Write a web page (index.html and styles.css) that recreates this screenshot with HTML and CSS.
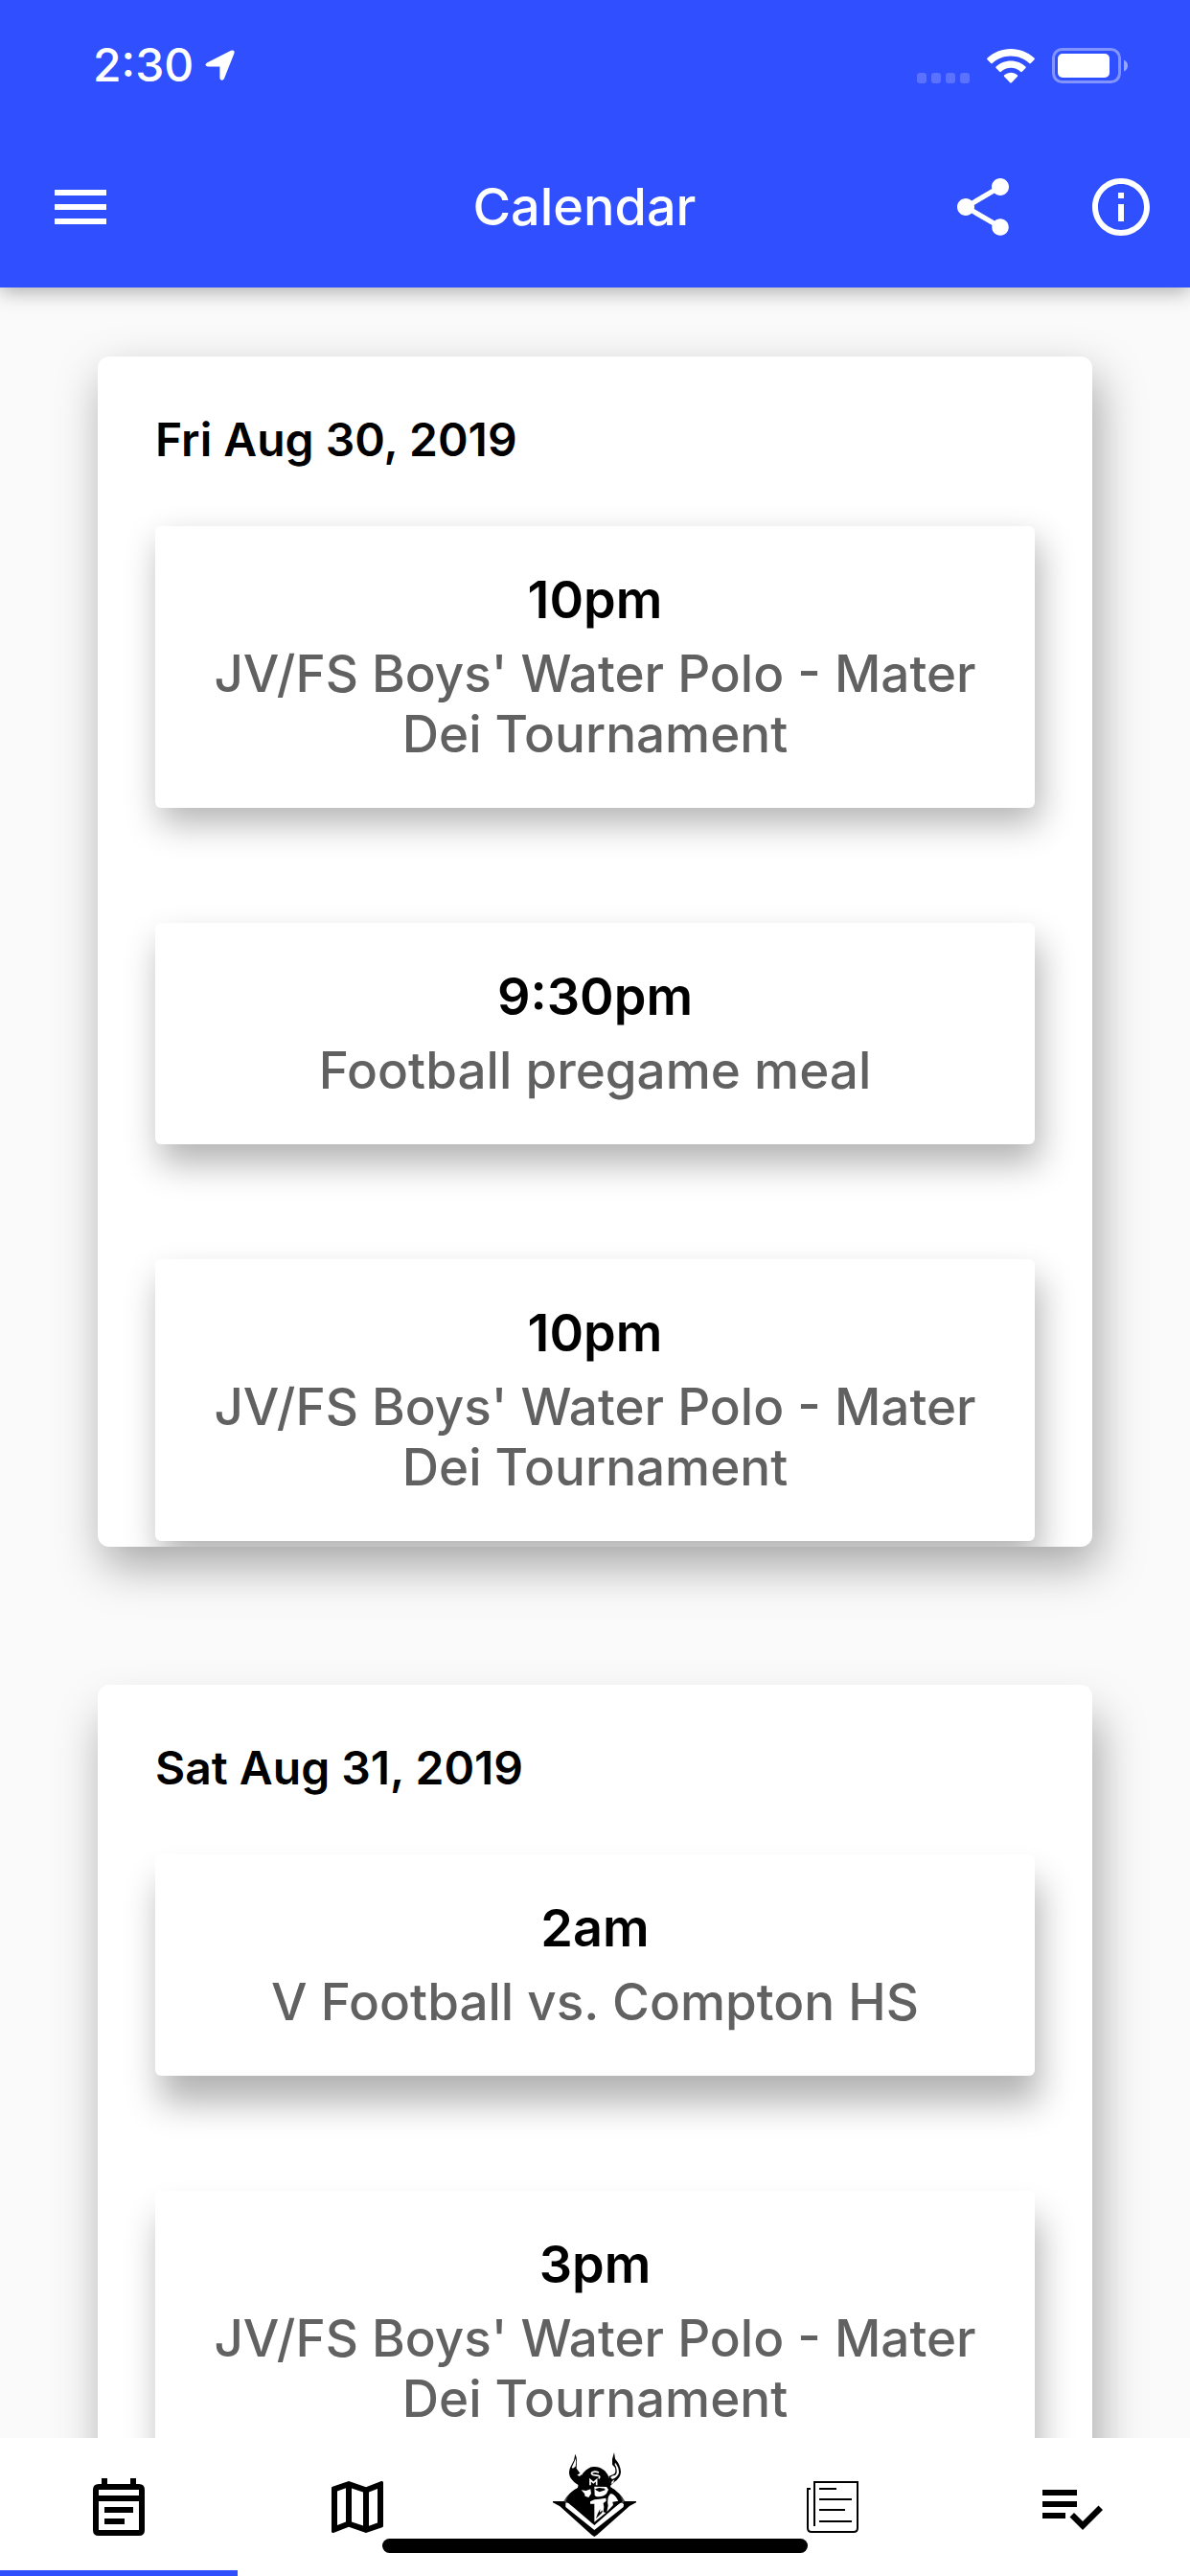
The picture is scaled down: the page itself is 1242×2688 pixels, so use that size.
FILE: index.html
```html
<!DOCTYPE html>
<html lang="en">
<head>
<meta charset="utf-8">
<meta name="viewport" content="width=device-width">
<title>Calendar</title>
<link rel="stylesheet" href="styles.css">
</head>
<body>
<header class="app-header">
  <div class="status-bar">
    <div class="status-left">
      <span class="clock">2:30</span>
      <svg class="location" viewBox="0 0 31 32" aria-hidden="true"><path d="M2 13.500 27 .8q4.500-1.600 3.400 3L20 30q-1.600 3-4 1-.6-1-.6-2.500V17.500H3Q-1.500 16.500 2 13.500z"/></svg>
    </div>
    <div class="status-right">
      <svg class="signal" viewBox="0 0 55 11" aria-hidden="true"><rect width="10" height="11" rx="3"/><rect x="15" width="10" height="11" rx="3"/><rect x="30" width="10" height="11" rx="3"/><rect x="45" width="10" height="11" rx="3"/></svg>
      <svg class="wifi" viewBox="0 0 50 36" aria-hidden="true"><path d="M25 0C34.500 0 43 3.600 49.500 9.600q.7.800 0 1.700L45.800 15q-.8.700-1.600 0C39 10.200 32.300 7.500 25 7.500S11 10.200 5.800 15q-.8.700-1.600 0L.5 11.300q-.7-.9 0-1.700C7 3.600 15.500 0 25 0zM25 12.400c6 0 11.400 2.300 15.400 6q.8.800 0 1.700l-3.600 3.700q-.8.700-1.700 0a14.700 14.700 0 0 0-20.200 0q-.9.700-1.700 0L9.600 20.100q-.8-.9 0-1.700c4-3.700 9.400-6 15.400-6zM25 24.800c2.600 0 5 1 6.800 2.500q.8.800 0 1.600l-6 6.300q-.8.800-1.600 0l-6-6.300q-.8-.8 0-1.600A10.500 10.500 0 0 1 25 24.800z"/></svg>
      <svg class="battery" viewBox="0 0 80 37" aria-hidden="true"><rect x="1.500" y="1.500" width="69" height="34" rx="9" fill="none" stroke="#fff" stroke-width="3" opacity=".4"/><rect x="6" y="6" width="54" height="25" rx="5"/><path d="M75 12.500q4 2 4 6t-4 6z" opacity=".5"/></svg>
    </div>
  </div>
  <div class="toolbar">
    <button class="icon-button menu-button" type="button" aria-label="Menu"><svg class="icon" viewBox="0 0 24 24"><path d="M3 18h18v-2H3v2zm0-5h18v-2H3v2zm0-7v2h18V6H3z"/></svg></button>
    <h1 class="title">Calendar</h1>
    <div class="actions">
      <button class="icon-button" type="button" aria-label="Share"><svg class="icon" viewBox="0 0 24 24"><path d="M18 16.080c-.76 0-1.440.3-1.960.77L8.910 12.700c.05-.23.09-.46.09-.7s-.04-.47-.09-.7l7.050-4.110c.54.5 1.250.81 2.040.81 1.660 0 3-1.340 3-3s-1.340-3-3-3-3 1.340-3 3c0 .24.04.47.09.7L8.040 9.810C7.500 9.310 6.790 9 6 9c-1.660 0-3 1.340-3 3s1.340 3 3 3c.79 0 1.500-.31 2.040-.81l7.120 4.160c-.05.21-.08.43-.08.65 0 1.610 1.310 2.920 2.920 2.920 1.610 0 2.920-1.310 2.920-2.920s-1.310-2.920-2.920-2.920z"/></svg></button>
      <button class="icon-button" type="button" aria-label="Information"><svg class="icon" viewBox="0 0 24 24"><path d="M11 17h2v-6h-2v6zm1-15C6.480 2 2 6.480 2 12s4.480 10 10 10 10-4.480 10-10S17.520 2 12 2zm0 18c-4.410 0-8-3.590-8-8s3.590-8 8-8 8 3.590 8 8-3.590 8-8 8zM11 9h2V7h-2v2z"/></svg></button>
    </div>
  </div>
</header>

<main class="days">
  <section class="day">
    <h2 class="date">Fri Aug 30, 2019</h2>
    <div class="events">
      <article class="event"><h3 class="time">10pm</h3><p class="name">JV/FS Boys' Water Polo - Mater Dei Tournament</p></article>
      <article class="event"><h3 class="time">9:30pm</h3><p class="name">Football pregame meal</p></article>
      <article class="event"><h3 class="time">10pm</h3><p class="name">JV/FS Boys' Water Polo - Mater Dei Tournament</p></article>
    </div>
  </section>
  <section class="day">
    <h2 class="date">Sat Aug 31, 2019</h2>
    <div class="events">
      <article class="event"><h3 class="time">2am</h3><p class="name">V Football vs. Compton HS</p></article>
      <article class="event"><h3 class="time">3pm</h3><p class="name">JV/FS Boys' Water Polo - Mater Dei Tournament</p></article>
    </div>
  </section>
</main>

<nav class="tabs" aria-label="Sections">
  <button class="tab tab-active" type="button" aria-label="Calendar"><svg class="icon" viewBox="0 0 24 24"><path fill-rule="evenodd" d="M6 2h2v2h8V2h2v2h1q2 0 2 2v14q0 2-2 2H5q-2 0-2-2V6q0-2 2-2h1zM5 6v2h14V6zM5 10v10h14V10zM7 12h10v2H7zM7 16h7v2H7z"/></svg></button>
  <button class="tab" type="button" aria-label="Map"><svg class="icon" viewBox="0 0 24 24"><path d="M20.500 3l-.16.03L15 5.100 9 3 3.360 4.900c-.21.07-.36.25-.36.48V20.500c0 .28.22.5.5.5l.16-.03L9 18.900l6 2.100 5.640-1.900c.21-.07.36-.25.36-.48V3.500c0-.28-.22-.5-.5-.5zM10 5.470l4 1.400v11.660l-4-1.400V5.470zm-5 .99l3-1.010v11.700l-3 1.160V6.460zm14 11.080l-3 1.010V6.860l3-1.160v11.840z"/></svg></button>
  <button class="tab" type="button" aria-label="Home">
    <svg class="mascot" viewBox="112 87 261 264">
      <defs><linearGradient id="edge" x1="0" x2="1"><stop offset="0" stop-color="#777"/><stop offset=".12" stop-color="#000"/><stop offset=".88" stop-color="#000"/><stop offset="1" stop-color="#777"/></linearGradient></defs>
      <path d="M144 243Q158 213 194 197L292 197Q322 210 340 243L242 322z" fill="url(#edge)"/>
      <path d="M112 240H148L154 247 242 318 330 247 336 240H373V244L352 255 250 346 242 351 234 346 134 256 112 244z"/>
      <path d="M152 246Q160 242 166 250L242 315 318 248Q327 242 334 249L333 258 242 330 152 258z" fill="#fff"/>
      <path d="M153 240 242 306 243 190 195 195Q163 210 153 240z"/>
      <path d="M243 306V190L293 196Q316 207 330 240z"/>
      <path d="M190 198Q196 148 232 133 256 128 275 145 293 164 293 200L266 194H222z"/>
      <path d="M182 92Q187 101 187 114L186 137 198 154 204 162 194 190Q176 181 166 164 160 150 166 135L178 112z"/>
      <path d="M183 106 185 117 183 131 175 137 171 134 180 115z" fill="#fff"/>
      <path d="M188 158l9-6 5 3-6 7z" fill="#fff"/>
      <path d="M304 87 307 107Q324 125 325 149 323 168 305 179L292 191 287 162 301 156Q311 153 307 135L298 125V108z"/>
      <path d="M307 119Q319 133 319 150 317 164 298 171L292 165 300 160Q314 160 312 143 312 132 306 125zM297 178l8-6-4 11-7 3z" fill="#fff"/>
      <path d="M256 150Q244 145 236 149 230 154 237 157L254 160Q262 163 255 169" fill="none" stroke="#fff" stroke-width="5"/>
      <path d="M229 190v-17l10 9 10-9v17" fill="none" stroke="#fff" stroke-width="5"/>
      <path d="M201 205 216 207 230 202 232 216 224 228 213 224 211 216z" fill="#fff"/>
      <path d="M242 194 280 195 286 203 280 216Q267 229 247 225L243 221z" fill="#fff"/>
      <path d="M244 202l13-4 17 2 2 5-9 3-9 3-9-5z"/>
      <path d="M229 241 242 235 258 233 278 230 279 239 270 246 272 258 270 274 278 276 242 305V248H229z" fill="#fff"/>
      <path d="M292 217Q304 213 317 239L299 242 301 252 281 273 285 254Q280 230 292 217z" fill="#fff"/>
      <path d="M252 280l8-16-1 11 9-7-2 8-19 18z"/>
    </svg>
  </button>
  <button class="tab" type="button" aria-label="News"><svg class="news" viewBox="0 0 54 54"><path d="M4 8H1v41q0 4 4 4h44q4 0 4-4V1H8v46M13 8h18M13 19h34M13 30h27M13 42h34"/></svg></button>
  <button class="tab" type="button" aria-label="Checklist"><svg class="icon" viewBox="0 0 24 24"><path d="M14 10H2v2h12v-2zm0-4H2v2h12V6zM2 16h8v-2H2v2zm19.500-4.500L23 13l-6.990 7-4.510-4.500L13 14l3.010 3 5.490-5.500z"/></svg></button>
  <div class="home-indicator"></div>
</nav>
</body>
</html>
```
FILE: styles.css
```css
* { box-sizing: border-box; }

body {
  display: flex;
  flex-direction: column;
  height: 100vh;
  margin: 0;
  background: #fafafa;
  color: #000;
  font-family: Inter, "Liberation Sans", sans-serif;
}

h1, h2, h3, p { margin: 0; }

button {
  padding: 0;
  border: 0;
  background: none;
  color: inherit;
}

svg { display: block; fill: currentColor; }

.icon { width: 72px; height: 72px; }

.app-header {
  position: relative;
  z-index: 1;
  flex: none;
  background: #304ffe;
  color: #fff;
  box-shadow: 0 4px 20px rgba(0, 0, 0, .32);
}

.status-bar {
  display: flex;
  align-items: center;
  justify-content: space-between;
  height: 132px;
  padding: 4px 64px 0 97px;
}

.status-left { display: flex; align-items: center; gap: 12px; }
.clock { font-size: 48px; line-height: 60px; font-weight: 500; }
.location { width: 31px; height: 32px; }
.status-right { display: flex; align-items: flex-end; gap: 18px; }
.signal { width: 55px; height: 11px; opacity: .2; }
.wifi { width: 50px; height: 36px; }
.battery { width: 80px; height: 37px; }

.toolbar {
  display: grid;
  grid-template-columns: 288px 1fr 288px;
  align-items: center;
  height: 168px;
}

.icon-button {
  display: flex;
  align-items: center;
  justify-content: center;
  width: 144px;
  height: 144px;
}

.menu-button { width: 168px; }
.actions { display: flex; }

.title {
  padding-right: 22px;
  font-size: 54px;
  line-height: 72px;
  font-weight: 500;
  text-align: center;
}

.days {
  display: flex;
  flex: 1;
  flex-direction: column;
  gap: 144px;
  min-height: 0;
  padding: 72px 102px;
  overflow-y: auto;
  scrollbar-width: none;
}

.day {
  flex: none;
  padding: 60px 60px 6px;
  overflow: hidden;
  border-radius: 12px;
  background: #fff;
  box-shadow: 6px 20px 48px rgba(0, 0, 0, .34);
}

.day + .day { box-shadow: 6px 32px 48px rgba(0, 0, 0, .34); }

.date {
  margin-bottom: 63px;
  font-size: 48px;
  line-height: 54px;
  font-weight: 600;
}

.events { display: grid; gap: 120px; }

.event {
  display: grid;
  gap: 15px;
  padding: 45px;
  border-radius: 6px;
  background: #fff;
  box-shadow: 5px 16px 36px rgba(0, 0, 0, .3);
  text-align: center;
}

/* shadows drop further for cards lower on the page */
.event + .event { box-shadow: 5px 20px 36px rgba(0, 0, 0, .3); }
.day + .day .event { box-shadow: 5px 28px 36px rgba(0, 0, 0, .3); }

.time { font-size: 54px; line-height: 63px; font-weight: 600; }
.name { color: #616161; font-size: 53px; line-height: 63px; font-weight: 500; }

.tabs {
  position: relative;
  display: grid;
  flex: none;
  grid-template-columns: repeat(5, 1fr);
  height: 144px;
  background: #fff;
}

.tab { display: flex; align-items: center; justify-content: center; }
.tab-active { box-shadow: inset 0 -6px #304ffe; }
.news { width: 54px; height: 54px; fill: none; stroke: #000; stroke-width: 2px; }
.mascot { width: 87px; height: 88px; margin-bottom: 26px; }

.home-indicator {
  position: absolute;
  bottom: 24px;
  left: 50%;
  width: 444px;
  height: 15px;
  margin-left: -222px;
  border-radius: 8px;
  background: #000;
}
```
